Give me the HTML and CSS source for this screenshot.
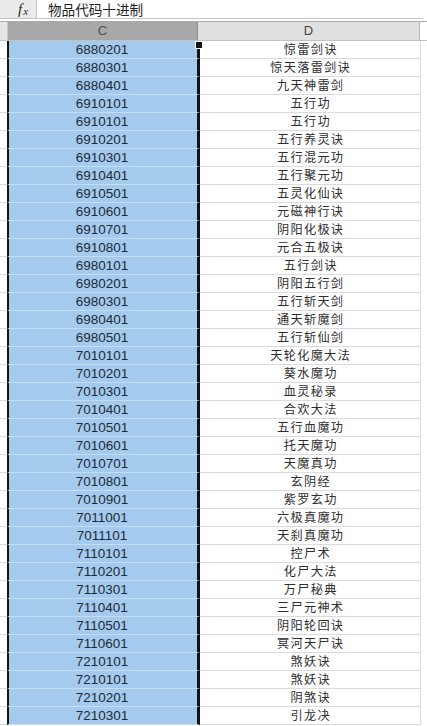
FILE: index.html
```html
<!DOCTYPE html>
<html lang="zh">
<head>
<meta charset="utf-8">
<title>物品代码十进制</title>
<link rel="stylesheet" href="styles.css">
</head>
<body>
<div class="sheet">
  <div class="fbar">
    <div class="fx"><span class="fx-f">f</span><span class="fx-x">x</span></div>
    <div class="formula">物品代码十进制</div>
  </div>
  <div class="colhead">
    <div class="corner"></div>
    <div class="hc sel">C</div>
    <div class="hc d">D</div>
    <div class="rest"></div>
  </div>
  <div class="rows">
    <div class="row"><div class="b"></div><div class="c">6880201</div><div class="d">惊雷剑诀</div><div class="rest"></div><span class="handle"></span></div>
    <div class="row"><div class="b"></div><div class="c">6880301</div><div class="d">惊天落雷剑诀</div><div class="rest"></div></div>
    <div class="row"><div class="b"></div><div class="c">6880401</div><div class="d">九天神雷剑</div><div class="rest"></div></div>
    <div class="row"><div class="b"></div><div class="c">6910101</div><div class="d">五行功</div><div class="rest"></div></div>
    <div class="row"><div class="b"></div><div class="c">6910101</div><div class="d">五行功</div><div class="rest"></div></div>
    <div class="row"><div class="b"></div><div class="c">6910201</div><div class="d">五行养灵诀</div><div class="rest"></div></div>
    <div class="row"><div class="b"></div><div class="c">6910301</div><div class="d">五行混元功</div><div class="rest"></div></div>
    <div class="row"><div class="b"></div><div class="c">6910401</div><div class="d">五行聚元功</div><div class="rest"></div></div>
    <div class="row"><div class="b"></div><div class="c">6910501</div><div class="d">五灵化仙诀</div><div class="rest"></div></div>
    <div class="row"><div class="b"></div><div class="c">6910601</div><div class="d">元磁神行诀</div><div class="rest"></div></div>
    <div class="row"><div class="b"></div><div class="c">6910701</div><div class="d">阴阳化极诀</div><div class="rest"></div></div>
    <div class="row"><div class="b"></div><div class="c">6910801</div><div class="d">元合五极诀</div><div class="rest"></div></div>
    <div class="row"><div class="b"></div><div class="c">6980101</div><div class="d">五行剑诀</div><div class="rest"></div></div>
    <div class="row"><div class="b"></div><div class="c">6980201</div><div class="d">阴阳五行剑</div><div class="rest"></div></div>
    <div class="row"><div class="b"></div><div class="c">6980301</div><div class="d">五行斩天剑</div><div class="rest"></div></div>
    <div class="row"><div class="b"></div><div class="c">6980401</div><div class="d">通天斩魔剑</div><div class="rest"></div></div>
    <div class="row"><div class="b"></div><div class="c">6980501</div><div class="d">五行斩仙剑</div><div class="rest"></div></div>
    <div class="row"><div class="b"></div><div class="c">7010101</div><div class="d">天轮化魔大法</div><div class="rest"></div></div>
    <div class="row"><div class="b"></div><div class="c">7010201</div><div class="d">葵水魔功</div><div class="rest"></div></div>
    <div class="row"><div class="b"></div><div class="c">7010301</div><div class="d">血灵秘录</div><div class="rest"></div></div>
    <div class="row"><div class="b"></div><div class="c">7010401</div><div class="d">合欢大法</div><div class="rest"></div></div>
    <div class="row"><div class="b"></div><div class="c">7010501</div><div class="d">五行血魔功</div><div class="rest"></div></div>
    <div class="row"><div class="b"></div><div class="c">7010601</div><div class="d">托天魔功</div><div class="rest"></div></div>
    <div class="row"><div class="b"></div><div class="c">7010701</div><div class="d">天魔真功</div><div class="rest"></div></div>
    <div class="row"><div class="b"></div><div class="c">7010801</div><div class="d">玄阴经</div><div class="rest"></div></div>
    <div class="row"><div class="b"></div><div class="c">7010901</div><div class="d">紫罗玄功</div><div class="rest"></div></div>
    <div class="row"><div class="b"></div><div class="c">7011001</div><div class="d">六极真魔功</div><div class="rest"></div></div>
    <div class="row"><div class="b"></div><div class="c">7011101</div><div class="d">天刹真魔功</div><div class="rest"></div></div>
    <div class="row"><div class="b"></div><div class="c">7110101</div><div class="d">控尸术</div><div class="rest"></div></div>
    <div class="row"><div class="b"></div><div class="c">7110201</div><div class="d">化尸大法</div><div class="rest"></div></div>
    <div class="row"><div class="b"></div><div class="c">7110301</div><div class="d">万尸秘典</div><div class="rest"></div></div>
    <div class="row"><div class="b"></div><div class="c">7110401</div><div class="d">三尸元神术</div><div class="rest"></div></div>
    <div class="row"><div class="b"></div><div class="c">7110501</div><div class="d">阴阳轮回诀</div><div class="rest"></div></div>
    <div class="row"><div class="b"></div><div class="c">7110601</div><div class="d">冥河天尸诀</div><div class="rest"></div></div>
    <div class="row"><div class="b"></div><div class="c">7210101</div><div class="d">煞妖诀</div><div class="rest"></div></div>
    <div class="row"><div class="b"></div><div class="c">7210101</div><div class="d">煞妖诀</div><div class="rest"></div></div>
    <div class="row"><div class="b"></div><div class="c">7210201</div><div class="d">阴煞诀</div><div class="rest"></div></div>
    <div class="row"><div class="b"></div><div class="c">7210301</div><div class="d">引龙决</div><div class="rest"></div></div>
  </div>
</div>
</body>
</html>
```
FILE: styles.css
```css
html, body {
  margin: 0;
  padding: 0;
  background: #ffffff;
}
body {
  width: 427px;
  height: 726px;
  overflow: hidden;
  font-family: "Liberation Sans", "Noto Sans CJK SC", sans-serif;
}
.sheet {
  display: flex;
  flex-direction: column;
}

/* formula bar */
.fbar {
  display: flex;
  height: 18px;
  width: 423px;
  border-bottom: 1px solid #c4c4c4;
}
.fx {
  width: 37px;
  background: #ebebeb;
  border-right: 1px solid #c6c6c6;
  display: flex;
  align-items: center;
  padding-left: 18px;
  box-sizing: border-box;
  font-family: "Liberation Serif", serif;
  font-style: italic;
  color: #2a2a2a;
}
.fx-f { font-size: 15px; line-height: 16px; }
.fx-x { font-size: 11px; line-height: 12px; margin-left: 1px; margin-top: 3px; }
.formula {
  flex: 1;
  padding-left: 11px;
  font-family: "Noto Sans CJK SC", sans-serif;
  font-size: 13.6px;
  line-height: 18px;
  color: #1e1e1e;
}

/* column header */
.colhead {
  margin-top: 2px;
  display: grid;
  grid-template-columns: 8px 190px 222px 1fr;
  height: 20px;
  box-sizing: border-box;
  border-top: 1px solid #a9a9a9;
  border-bottom: 1px solid #c2c2c2;
}
.corner {
  background: #e6e6e6;
  border-right: 1px solid #c8c8c8;
}
.hc {
  text-align: center;
  font-size: 13px;
  line-height: 18px;
}
.hc.sel {
  background: #a8a8a8;
  color: #505050;
  border-right: 1px solid #8c8c8c;
}
.hc.d {
  background: #e0e0e0;
  color: #444;
  border-right: 1px solid #b8b8b8;
}
.colhead .rest { background: #fff; }

/* rows */
.row {
  position: relative;
  display: grid;
  grid-template-columns: 7px 193px 221px 1fr;
  height: 18px;
}
.row .b {
  border-bottom: 1px solid #dcdcdc;
}
.row .c {
  background: #a4cbee;
  border-left: 2px solid #141414;
  border-right: 3px solid #141414;
  border-bottom: 1px solid #c5ddf3;
  text-align: center;
  font-size: 13.5px;
  line-height: 17px;
  color: #1e2a36;
  padding-right: 2px;
}
.row .d {
  border-bottom: 1px solid #dcdcdc;
  border-right: 1px solid #dcdcdc;
  text-align: center;
  font-family: "Noto Sans CJK SC", sans-serif;
  font-size: 12.2px;
  letter-spacing: 1.3px;
  text-indent: 1.3px;
  line-height: 17px;
  color: #2e2e2e;
}
.row .rest { background: #fff; }
.handle {
  position: absolute;
  left: 196px;
  top: 1px;
  width: 6px;
  height: 6px;
  background: #141414;
  border: 1px solid #fff;
  box-sizing: content-box;
  margin-left: -1px;
  margin-top: -1px;
}
```
